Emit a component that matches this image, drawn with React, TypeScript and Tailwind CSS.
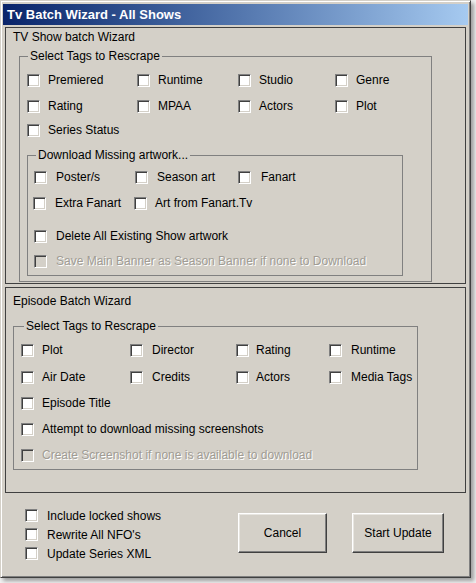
import React from 'react';
import clsx from 'clsx';

const Check: React.FC<{
  label: string;
  className?: string;
  gap?: string;
  disabled?: boolean;
}> = ({ label, className, gap = 'gap-[8px]', disabled }) => {
  return (
    <div className={clsx('flex items-center shrink-0', gap, className)}>
      <span
        className={clsx(
          'w-[13px] h-[13px] shrink-0 border border-t-[#808080] border-l-[#808080] border-r-white border-b-white shadow-[inset_1px_1px_0_#404040,inset_-1px_-1px_0_#d4d0c8]',
          disabled ? 'bg-[#d4d0c8]' : 'bg-white'
        )}
      />
      <span
        className={clsx(
          'whitespace-nowrap leading-[14px]',
          disabled ? 'text-[#a09c94] [text-shadow:1px_1px_0_#fff]' : 'text-black'
        )}
      >
        {label}
      </span>
    </div>
  );
};

const Group: React.FC<{
  legend: string;
  className: string;
  legendClass: string;
  children: React.ReactNode;
}> = ({ legend, className, legendClass, children }) => {
  return (
    <fieldset className={clsx('border border-[#808080] p-0 m-0 min-w-0', className)}>
      <legend className={clsx('px-[2px] leading-[14px]', legendClass)}>{legend}</legend>
      {children}
    </fieldset>
  );
};

const Button: React.FC<{ label: string; className: string }> = ({ label, className }) => (
  <button
    className={clsx(
      'h-[40px] bg-[#d4d0c8] border border-t-white border-l-white border-r-[#404040] border-b-[#404040] shadow-[inset_-1px_-1px_0_#808080,inset_1px_1px_0_#e8e6e1] flex items-center justify-center text-black text-[12px]',
      className
    )}
  >
    {label}
  </button>
);

export default function App() {
  return (
    <div className="w-[476px] h-[583px] bg-[#f2f2f2] font-['Liberation_Sans',Arial,sans-serif] text-[12px] text-black overflow-hidden">
      <div className="w-[471px] h-[578px] bg-[#d4d0c8] border border-t-[#d4d0c8] border-l-[#d4d0c8] border-r-[#404040] border-b-[#404040] shadow-[inset_1px_1px_0_#fff,inset_-1px_-1px_0_#808080,3px_3px_4px_rgba(0,0,0,0.35)] px-[2px] pt-[3px] flex flex-col">
        {/* title bar */}
        <div className="h-[21px] bg-linear-to-r from-[#0a246a] to-[#a6caf0] flex items-center pl-[4px] text-white font-bold text-[13px] leading-[16px]">
          Tv Batch Wizard - All Shows
        </div>

        {/* TV show panel */}
        <div className="ml-[2px] mt-[2px] w-[461px] h-[257px] border border-[#404040] overflow-hidden pt-[2px] flex flex-col">
          <div className="pl-[7px] leading-[14px] h-[14px]">TV Show batch Wizard</div>
          <Group
            legend="Select Tags to Rescrape"
            className="ml-[13px] mt-[5px] w-[413px] h-[233px] shrink-0"
            legendClass="ml-[8px]"
          >
            <div className="pl-[7px] mt-[7px] h-[20px] flex items-center">
              <Check label="Premiered" className="w-[110px]" />
              <Check label="Runtime" className="w-[101px]" />
              <Check label="Studio" className="w-[97px]" />
              <Check label="Genre" />
            </div>
            <div className="pl-[7px] mt-[6px] h-[20px] flex items-center">
              <Check label="Rating" className="w-[110px]" />
              <Check label="MPAA" className="w-[101px]" />
              <Check label="Actors" className="w-[97px]" />
              <Check label="Plot" />
            </div>
            <div className="pl-[7px] mt-[4px] h-[20px] flex items-center">
              <Check label="Series Status" />
            </div>

            <Group
              legend="Download Missing artwork..."
              className="ml-[7px] mt-[8px] w-[376px] pb-[4px]"
              legendClass="ml-[8px]"
            >
              <div className="pl-[6px] mt-[5px] h-[20px] flex items-center">
                <Check label="Poster/s" className="w-[101px]" gap="gap-[9px]" />
                <Check label="Season art" className="w-[103px]" gap="gap-[9px]" />
                <Check label="Fanart" gap="gap-[10px]" />
              </div>
              <div className="pl-[5px] mt-[6px] h-[20px] flex items-center">
                <Check label="Extra Fanart" className="w-[101px]" gap="gap-[9px]" />
                <Check label="Art from Fanart.Tv" gap="gap-[8px]" />
              </div>
              <div className="pl-[6px] mt-[13px] h-[20px] flex items-center">
                <Check label="Delete All Existing Show artwork" gap="gap-[9px]" />
              </div>
              <div className="pl-[6px] mt-[5px] h-[20px] flex items-center">
                <Check
                  label="Save Main Banner as Season Banner if none to Download"
                  gap="gap-[9px]"
                  disabled
                />
              </div>
            </Group>
          </Group>
        </div>

        {/* Episode panel */}
        <div className="ml-[2px] mt-[3px] w-[461px] h-[206px] border border-[#404040] overflow-hidden pt-[6px] flex flex-col">
          <div className="pl-[7px] leading-[14px] h-[14px]">Episode Batch Wizard</div>
          <Group
            legend="Select Tags to Rescrape"
            className="ml-[7px] mt-[11px] w-[405px] pb-[4px] shrink-0"
            legendClass="ml-[10px]"
          >
            <div className="pl-[7px] mt-[7px] h-[20px] flex items-center">
              <Check label="Plot" className="w-[109px]" />
              <Check label="Director" className="w-[106px]" gap="gap-[9px]" />
              <Check label="Rating" className="w-[93px]" gap="gap-[7px]" />
              <Check label="Runtime" gap="gap-[9px]" />
            </div>
            <div className="pl-[7px] mt-[7px] h-[20px] flex items-center">
              <Check label="Air Date" className="w-[109px]" />
              <Check label="Credits" className="w-[106px]" gap="gap-[9px]" />
              <Check label="Actors" className="w-[93px]" gap="gap-[7px]" />
              <Check label="Media Tags" gap="gap-[9px]" />
            </div>
            <div className="pl-[7px] mt-[6px] h-[20px] flex items-center">
              <Check label="Episode Title" />
            </div>
            <div className="pl-[7px] mt-[6px] h-[20px] flex items-center">
              <Check label="Attempt to download missing screenshots" />
            </div>
            <div className="pl-[7px] mt-[6px] h-[20px] flex items-center">
              <Check label="Create Screenshot if none is available to download" disabled />
            </div>
          </Group>
        </div>

        {/* footer */}
        <div className="flex pl-[22px]">
          <div className="w-[213px] pt-[13px] flex flex-col">
            <Check label="Include locked shows" className="h-[19px]" gap="gap-[9px]" />
            <Check label="Rewrite All NFO's" className="h-[19px]" gap="gap-[9px]" />
            <Check label="Update Series XML" className="h-[19px]" gap="gap-[9px]" />
          </div>
          <div className="mt-[20px] flex gap-[25px]">
            <Button label="Cancel" className="w-[89px]" />
            <Button label="Start Update" className="w-[92px]" />
          </div>
        </div>
      </div>
    </div>
  );
}
